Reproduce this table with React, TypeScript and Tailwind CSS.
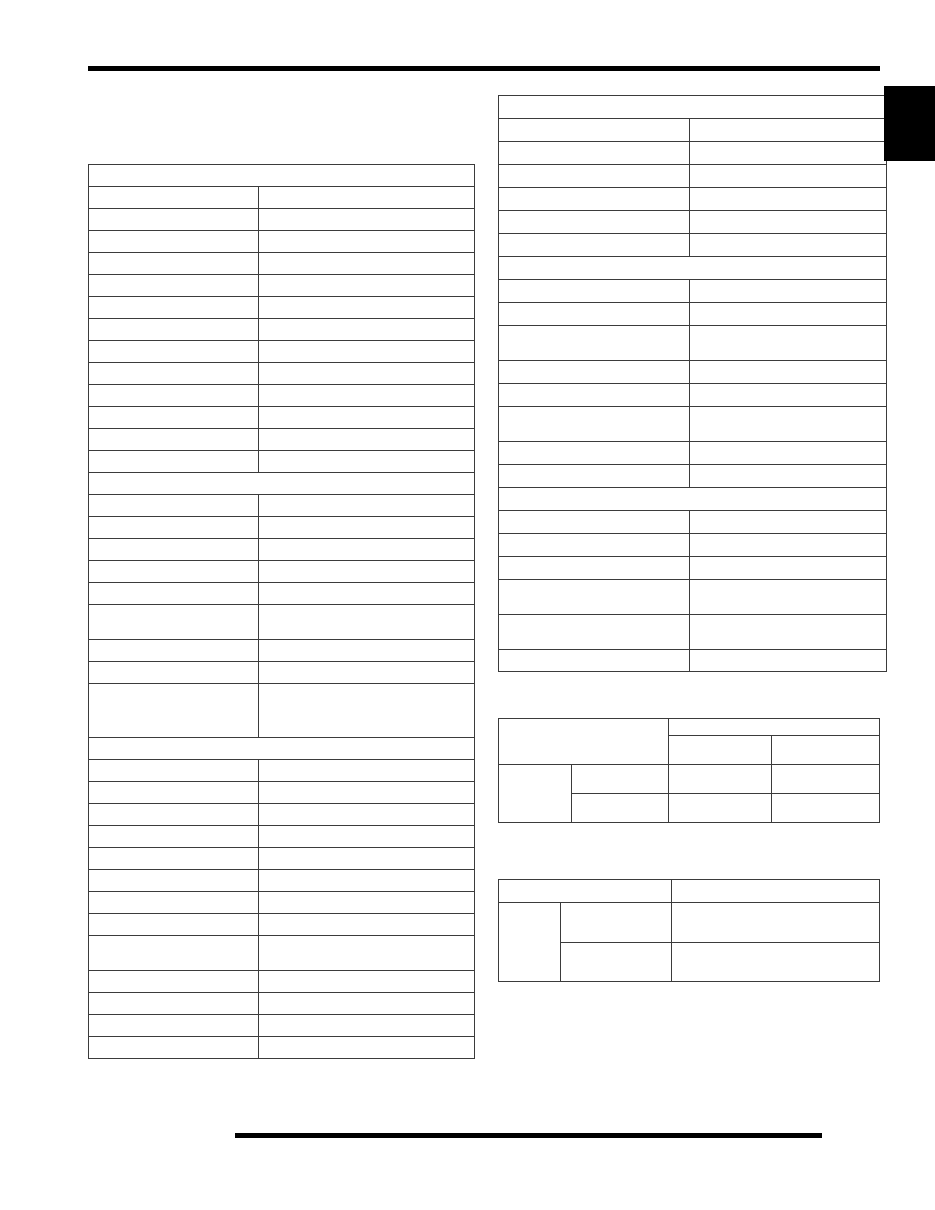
type Kind = "s" | "r" | "d" | "t" | "e";

const line = "border-r border-b border-[#3b3b3b]";

const repeat = (kind: Kind, n: number): Kind[] => Array.from({ length: n }, () => kind);

const leftRows: Kind[] = [
  "s",
  ...repeat("r", 13),
  "s",
  ...repeat("r", 5),
  "d",
  ...repeat("r", 2),
  "t",
  "s",
  ...repeat("r", 8),
  "d",
  ...repeat("r", 4),
];

// "e" is the slightly shorter closing row of the right table
const rightRows: Kind[] = [
  "s",
  ...repeat("r", 6),
  "s",
  ...repeat("r", 2),
  "d",
  ...repeat("r", 2),
  "d",
  ...repeat("r", 2),
  "s",
  ...repeat("r", 3),
  "d",
  "d",
  "e",
];

const leftHeights: Record<Kind, string> = {
  s: "h-[22px]",
  r: "h-[22px]",
  d: "h-[35px]",
  t: "h-[54px]",
  e: "h-[22px]",
};

const rightHeights: Record<Kind, string> = {
  s: "h-[23px]",
  r: "h-[23px]",
  d: "h-[35px]",
  t: "h-[54px]",
  e: "h-[22px]",
};

function SpecTable({
  rows,
  heights,
  cols,
}: {
  rows: Kind[];
  heights: Record<Kind, string>;
  cols: string;
}) {
  return (
    <div className={`grid ${cols} border-l border-t border-[#3b3b3b]`}>
      {rows.map((kind, i) =>
        kind === "s" ? (
          <div key={i} className={`col-span-2 ${heights[kind]} ${line}`} />
        ) : (
          [
            <div key={`${i}-a`} className={`${heights[kind]} ${line}`} />,
            <div key={`${i}-b`} className={`${heights[kind]} ${line}`} />,
          ]
        )
      )}
    </div>
  );
}

function RatingTable() {
  return (
    <div className="grid w-[382px] grid-cols-[73px_97px_103px_108px] grid-rows-[17px_29px_29px_29px] border-l border-t border-[#3b3b3b]">
      <div className={`col-span-2 row-span-2 ${line}`} />
      <div className={`col-span-2 ${line}`} />
      <div className={line} />
      <div className={line} />
      <div className={`row-span-2 ${line}`} />
      <div className={line} />
      <div className={line} />
      <div className={line} />
      <div className={line} />
      <div className={line} />
      <div className={line} />
    </div>
  );
}

function NoteTable() {
  return (
    <div className="grid w-[382px] grid-cols-[62px_111px_208px] grid-rows-[23px_40px_39px] border-l border-t border-[#3b3b3b]">
      <div className={`col-span-2 ${line}`} />
      <div className={line} />
      <div className={`row-span-2 ${line}`} />
      <div className={line} />
      <div className={line} />
      <div className={line} />
      <div className={line} />
    </div>
  );
}

export default function App() {
  return (
    <div className="relative h-[1210px] w-[935px] overflow-hidden bg-white font-['Liberation_Sans',sans-serif]">
      <div className="ml-[88px] mt-[66px] h-[5px] w-[792px] bg-black" />

      <div className="flex items-start">
        <section className="ml-[88px] w-[387px] pt-[93px]">
          <SpecTable rows={leftRows} heights={leftHeights} cols="grid-cols-[170px_216px]" />
        </section>

        <section className="ml-[23px] w-[389px] pt-[24px]">
          <SpecTable rows={rightRows} heights={rightHeights} cols="grid-cols-[191px_197px]" />
          <div className="mt-[46px]">
            <RatingTable />
          </div>
          <div className="mt-[56px]">
            <NoteTable />
          </div>
        </section>
      </div>

      <div className="ml-[235px] mt-[74px] h-[5px] w-[587px] bg-black" />

      {/* chapter tab on the page edge */}
      <div className="absolute left-[884px] top-[86px] h-[75px] w-[51px] bg-black" />
    </div>
  );
}
